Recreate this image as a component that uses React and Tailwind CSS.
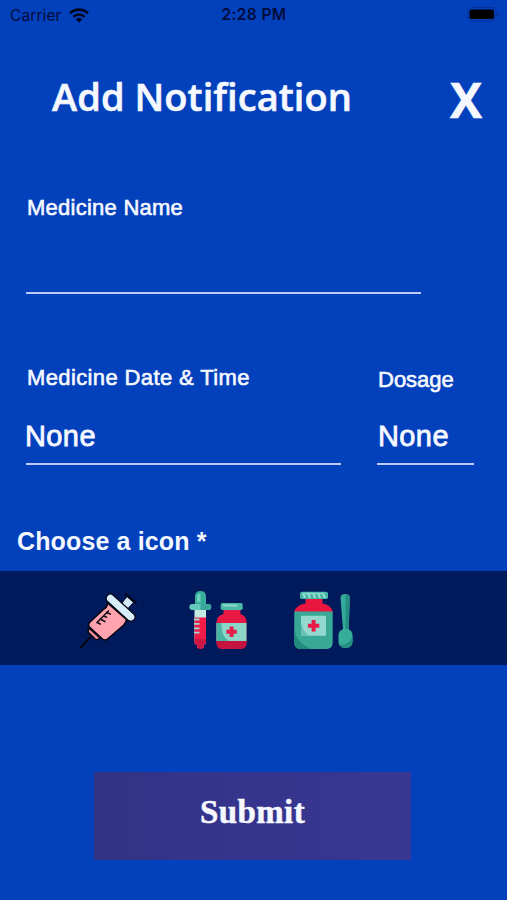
import React from "react";

const StatusBar = () => (
  <div className="grid h-[30px] grid-cols-3 items-center pl-[10px] pr-[7px] font-['Inter',sans-serif] text-[15.5px] leading-none text-[#020c3c]">
    <div className="flex items-center gap-[7px] pt-px">
      <span className="tracking-[0.1px]">Carrier</span>
      <svg className="mb-px" width="20" height="15" viewBox="0 0 20 15" fill="none" stroke="#01061f" strokeWidth="2.6">
        <path d="M1 5.3a12.8 12.8 0 0 1 18 0" />
        <path d="M4.3 8.8a8.1 8.1 0 0 1 11.4 0" />
        <path d="M10 14.6 6.8 11.4a4.5 4.5 0 0 1 6.4 0z" fill="#01061f" stroke="none" />
      </svg>
    </div>
    <span className="whitespace-nowrap pr-[2px] text-center font-semibold tracking-[0.35px]">2:28 PM</span>
    <svg className="mb-px justify-self-end" width="33" height="15" viewBox="0 0 33 15">
      <rect x="0.5" y="0.5" width="28.5" height="13.5" rx="4" fill="none" stroke="#04309a" />
      <rect x="2.5" y="2.5" width="24.5" height="9.5" rx="1.8" fill="#000" />
      <path d="M30.5 5v4.500q1.700-.6 1.700-2.200T30.500 5z" fill="#04309a" />
    </svg>
  </div>
);

const SyringeIcon = () => (
  <svg width="60" height="60" viewBox="0 0 60 60" strokeLinecap="round" strokeLinejoin="round">
    <path d="M1.500 56.500 11.500 46" stroke="#050510" strokeWidth="1.900" />
    <path d="M9.500 41.500q-1.500-2.500 1-4l10 9q-2 3.500-4.500 1.500z" fill="#f4899a" stroke="#050510" strokeWidth="1.500" />
    <path d="M28.500 12 47.500 28.500Q46.500 33.500 42.500 36L28.500 48q-2.500 2-5 0L10.500 36q-2-2.200 0-4.500L25 18q3.500-2 3.500-6z" fill="#ffa3ae" stroke="#050510" strokeWidth="1.500" />
    <path d="m18 31.500 11.500-11.500M18 31.500l3.200 1.500M21.500 28l4.300 2.500M24.800 24.800l2.700 1.400M27.500 21.500l3.700 1.500" fill="none" stroke="#180d1a" strokeWidth="1.700" />
    <path d="m43 12 5-6.500 6.500 6-5.500 6z" fill="#d3ebf8" stroke="#050510" strokeWidth="1" />
    <path d="M46.500 3 57 12" stroke="#050510" strokeWidth="1.800" />
    <path d="M28.500 4.300q2.800-2.800 5.800 0l20.500 18.700q2.700 3 0 6-3 2.600-6 0L28.300 10.300q-2.500-3 .2-6z" fill="#d8effb" stroke="#050510" strokeWidth="1.200" />
  </svg>
);

const DropperIcon = () => (
  <svg width="60" height="60" viewBox="0 0 60 60">
    <path d="M6 13V5.500Q6 0 11.500 0T17 5.500V13z" fill="#37ad9b" />
    <path d="M8 11V6q0-3.500 3.500-3.500V11z" fill="#6fd0bf" />
    <rect x="0.300" y="13" width="22" height="6" rx="3" fill="#63c9b8" />
    <path d="M11.500 13h7.700q3 0 3 3t-3 3h-7.700z" fill="#3aa899" />
    <path d="M5.500 19H17v32q0 2.500-2.500 3v3H8.500v-3q-3-.5-3-3z" fill="#c3ebe5" />
    <path d="M5.500 26.500H17V51q0 2.500-2.500 3v3q-3 1.500-6 0v-3q-3-.5-3-3z" fill="#f21b48" />
    <path d="M5.500 48H17v3q0 2.500-2.500 3v3q-3 1.500-6 0v-3q-3-.5-3-3z" fill="#cf1745" />
    <path d="M5 28.500h5.500M5 32.900h5.500M5 37.300h5.500M5 41.700h5.500" stroke="#9edbd3" strokeWidth="1.800" />
    <path d="M34.500 18h17v5q6 2 6 8v20.500q0 6-6 6.500h-18q-6-.5-6-6.500V31q0-6 7-8z" fill="#e91945" />
    <path d="M27.500 50h30v1.500q0 6-6 6.500h-18q-6-.5-6-6.500z" fill="#c5143f" />
    <rect x="27.500" y="32" width="30" height="18" fill="#8bd6c9" />
    <path d="M27.500 32h5q-.5 13 7 18h-12z" fill="#49b5a5" />
    <rect x="31.700" y="12" width="22" height="7" rx="1.800" fill="#4dbaa9" />
    <path d="M34 14.500h14" stroke="#96ddd1" strokeWidth="1.800" />
    <path d="M42.600 35.600v10.400M37.400 40.800h10.400" stroke="#e51d48" strokeWidth="4" />
  </svg>
);

const BottleIcon = () => (
  <svg width="60" height="60" viewBox="0 0 60 60">
    <path d="M11.500 7h17v5.500q9 1.500 10.200 8.500H.300q1.200-7 11.200-8.500z" fill="#e9163f" />
    <path d="M.300 20.500h38.400v31q0 6.500-6 6.500H6.300q-6 0-6-6.500z" fill="#38a897" />
    <path d="M.300 36q1 16 17 22h-11q-6 0-6-6.500z" fill="#238b80" />
    <rect x="6" y="0.700" width="28" height="7.300" rx="1.800" fill="#48b6a7" />
    <path d="m9 2.500 2 4M14 2l2 5M19 2l2 5M24 2l2 5M29 2l2 5" stroke="#9ce2d7" strokeWidth="1.800" />
    <path d="M9 2.500h21" stroke="#8bd8cc" strokeWidth="1.600" />
    <rect x="7" y="24.700" width="25" height="20" rx="1" fill="#93d9cf" />
    <path d="M7 31q1 9 8 13.700H8q-1 0-1-1z" fill="#68bfb4" />
    <path d="M19.600 29v11.400M13.900 34.700h11.400" stroke="#e91945" strokeWidth="4" />
    <path d="M46.500 7q0-4 4.700-4t4.500 4l-1 33h-5.500z" fill="#34aa98" />
    <path d="M51.500 3q4.200.2 4.200 4l-1 33h-3.200z" fill="#248d82" />
    <path d="M49 38h5q4.500 2 4.500 6v6.500q0 6.500-7 6.500t-7-6.500V44q0-4 4.500-6z" fill="#36ad9a" />
    <path d="M58.500 46v4.500q0 6.500-7 6.500-4 0-6-3 9 0 13-8z" fill="#268e83" />
  </svg>
);

const Field = ({ label, value, className, labelClass, valueClass }) => (
  <div className={`flex flex-col border-b-2 border-[#bccbf8] ${className}`}>
    <label className={`whitespace-nowrap pl-px text-[22px] leading-[26px] [-webkit-text-stroke:0.6px_#f5f8ff] ${labelClass}`}>
      {label}
    </label>
    <span
      className={`mb-[11px] mt-auto text-[29px] leading-[32px] tracking-[0.4px] [-webkit-text-stroke:0.8px_#f5f8ff] ${valueClass}`}
    >
      {value}
    </span>
  </div>
);

const App = () => {
  return (
    <main className="flex h-[900px] w-[507px] flex-col overflow-hidden bg-[#0340bb] font-['Liberation_Sans',Arial,sans-serif] text-[#f5f8ff]">
      <StatusBar />

      <header className="flex h-[140px] items-start justify-between pl-[52px] pr-[25px] pt-[36px]">
        <h1 className="whitespace-nowrap font-['Open_Sans',sans-serif] text-[38px] font-semibold leading-[61px] tracking-[0.05px] [-webkit-text-stroke:0.6px_#f5f8ff]">
          Add Notification
        </h1>
        <button className="font-['Open_Sans',sans-serif] text-[48px] font-bold leading-[68px] [-webkit-text-stroke:0.5px_#f5f8ff]">
          X
        </button>
      </header>

      <Field label="Medicine Name" className="ml-[26px] mt-[25px] h-[99px] w-[395px]" labelClass="tracking-[0.25px]" />

      <div className="mt-[71px] flex gap-[36px] pl-[26px]">
        <Field
          label="Medicine Date & Time"
          value="None"
          className="h-[100px] w-[315px]"
          labelClass="tracking-[0.38px]"
          valueClass="-ml-px"
        />
        <Field label="Dosage" value="None" className="h-[100px] w-[97px]" labelClass="pt-[2px]" valueClass="pl-px" />
      </div>

      <h2 className="mt-[61px] pl-[17px] text-[25px] font-bold leading-[30px] tracking-[0.13px]">Choose a icon *</h2>

      <div className="mt-[15px] flex h-[94px] items-center bg-[#001a5c] pl-[79px] pt-[5px]">
        <SyringeIcon />
        <div className="ml-[50px] flex gap-[45px]">
          <DropperIcon />
          <BottleIcon />
        </div>
      </div>

      <button className="ml-[94px] mt-[107px] h-[88px] w-[317px] bg-linear-to-r from-[#323286] to-[#383894] pb-[7px] font-['Liberation_Serif',serif] text-[33px] font-bold tracking-[0.4px] [-webkit-text-stroke:0.5px_#f5f8ff]">
        Submit
      </button>
    </main>
  );
};

export default App;
